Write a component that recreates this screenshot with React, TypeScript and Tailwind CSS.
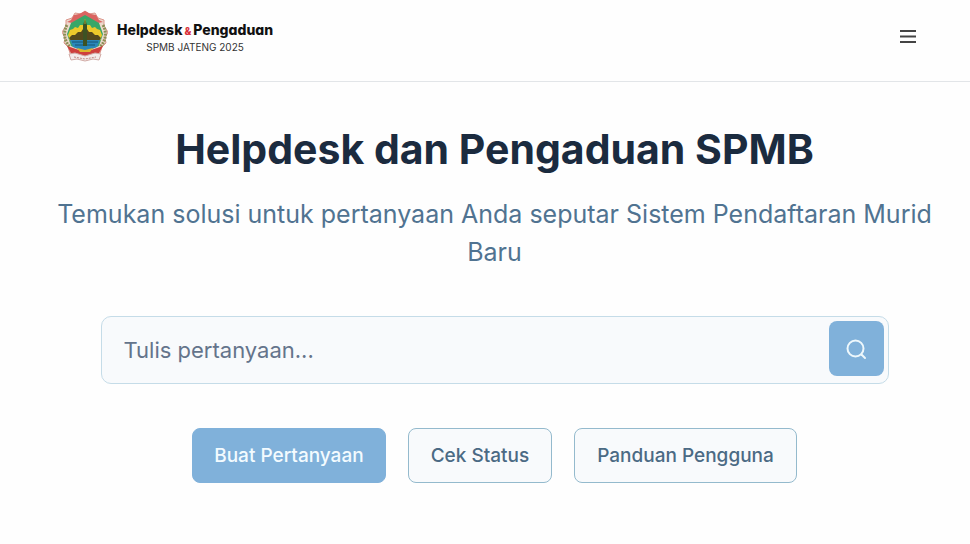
import { useState } from "react";

function Emblem() {
  return (
    <svg viewBox="0 0 46 52" className="h-[52px] w-[46px]" aria-hidden="true">
      <path d="M23 1 L27 4 L33 3 L36 8 L42 10 L42 16 L46 22 L43 28 L44 33 L40 37 L38 43 L30 43 L23 46 L16 43 L8 43 L6 37 L2 33 L3 28 L0 22 L4 16 L4 10 L10 8 L13 3 L19 4 Z" fill="#ecd9cd" stroke="#dc968c" strokeWidth="1" />
      <path d="M23 1 L29 4 L34 5 L37 10 L41 12 L36 13 L23 7 L10 13 L5 12 L9 10 L12 5 L17 4 Z" fill="#da6561" />
      <path d="M5 15 C1 22 2 31 8 37 M41 15 C45 22 44 31 38 37" fill="none" stroke="#8d8f55" strokeWidth="3" strokeDasharray="2 1" />
      <path d="M23 5 L37 13 L41 24 L37 36 L23 42 L9 36 L5 24 L9 13 Z" fill="#38a768" />
      <path d="M6 25 L8 20 L11 19 L13 17 L16 18 L18 15 L21 15 V31 H8 Z M40 25 L38 20 L35 19 L33 17 L30 18 L28 15 L25 15 V31 H38 Z" fill="#ecc92b" />
      <path d="M7 28 L10 25 L13 25 L16 22 L19 22 L21 19 V31 H9 Z M39 28 L36 25 L33 25 L30 22 L27 22 L25 19 V31 H37 Z" fill="#54491d" />
      <path d="M8 30 H38 L35 37 L23 41 L11 37 Z" fill="#2b87b9" />
      <path d="M10 32 H36 M13 35 H33" stroke="#175574" strokeWidth="1" />
      <path d="M23 9 L25 15 L25 36 H21 L21 15 Z" fill="#3d5223" />
      <path d="M23 9 V14" stroke="#a9a837" strokeWidth="1" />
      <path d="M5 36 L14 39 L23 42 L32 39 L41 36 L37 43 L23 47 L9 43 Z" fill="#ce3f3d" />
      <path d="M15 38 L23 40 L31 38 L28 42 H18 Z" fill="#ddb52c" />
      <path d="M7 44 L13 43 L23 46 L33 43 L39 44 L37 50 L31 49 L23 51 L15 49 L9 50 Z" fill="#f3eceb" stroke="#d1aaa5" strokeWidth="1" />
      <path d="M12 47 L23 49 L34 47" fill="none" stroke="#c08a84" strokeWidth="1" strokeDasharray="2 1" />
    </svg>
  );
}

function Header() {
  return (
    <header className="flex items-center justify-between border-b border-[#e2e5e8] pt-[10px] pr-[52px] pb-[19px] pl-[62px]">
      <a href="#" className="flex items-center gap-[9px]">
        <Emblem />
        <span className="flex flex-col items-center whitespace-nowrap text-[#111] [font-feature-settings:'cv11']">
          <span className="text-[14px] leading-5 font-extrabold">
            Helpdesk<span className="mx-[2px] text-[10px] text-[#d8303a]">&amp;</span>Pengaduan
          </span>
          <span className="text-[10px] leading-3 text-[#333]">SPMB JATENG 2025</span>
        </span>
      </a>
      <button type="button" aria-label="Menu" className="text-[#444]">
        <svg width="19" height="16" viewBox="0 0 19 16" stroke="currentColor" strokeWidth="2">
          <path d="M1 3H17M1 8.500H17M1 14H17" />
        </svg>
      </button>
    </header>
  );
}

export default function App() {
  const [question, setQuestion] = useState("");
  const links = ["Cek Status", "Panduan Pengguna"];

  return (
    <div className="min-h-screen bg-[#fefefe] font-['Inter','Noto_Sans',sans-serif]">
      <Header />
      <main className="pt-[41px] pr-[43px] pb-14 pl-[62px] text-center">
        <h1 className="text-[41px] leading-[52px] font-bold text-[#1b2b3f]">Helpdesk dan Pengaduan SPMB</h1>
        <p className="-mx-3 mt-5 text-[25px] leading-[38px] text-[#507391]">
          Temukan solusi untuk pertanyaan Anda seputar Sistem Pendaftaran Murid Baru
        </p>
        <form
          onSubmit={(e) => e.preventDefault()}
          className="mx-auto mt-[45px] flex h-[68px] max-w-[788px] items-start rounded-[10px] border border-[#c5dce8] bg-[#f8fafc] pt-1 pr-1 pl-[22px]"
        >
          <input
            type="text"
            aria-label="Tulis pertanyaan"
            placeholder="Tulis pertanyaan..."
            value={question}
            onChange={(e) => setQuestion(e.target.value)}
            className="h-[58px] min-w-0 flex-1 bg-transparent text-[22px] leading-8 text-[#334e68] outline-none placeholder:text-[#64748b]"
          />
          <button type="submit" aria-label="Cari" className="flex size-[55px] items-center justify-center rounded-lg bg-[#80b1da] text-[#eef8fc]">
            <svg width="22" height="22" viewBox="0 0 22 22" fill="none" stroke="currentColor" strokeWidth="2" strokeLinecap="round">
              <circle cx="10.500" cy="10.500" r="8" />
              <path d="M16.500 16.500L20 20" />
            </svg>
          </button>
        </form>
        <div className="mt-11 flex flex-wrap justify-center gap-[22px] text-[19px] leading-[27px] font-medium">
          <button type="button" className="rounded-lg border border-[#80b1da] bg-[#80b1da] px-[21px] py-[13px] text-[#f3fbff]">Buat Pertanyaan</button>
          {links.map((label) => (
            <button key={label} type="button" className="rounded-lg border border-[#94bacd] bg-[#f8fafc] px-[22px] py-[13px] text-[#4b6a84]">
              {label}
            </button>
          ))}
        </div>
      </main>
    </div>
  );
}
